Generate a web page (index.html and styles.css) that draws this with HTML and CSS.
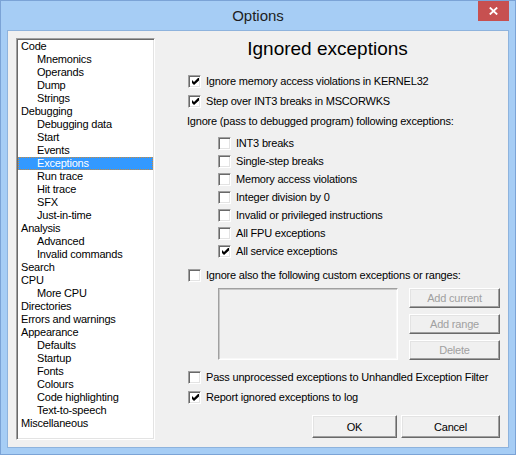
FILE: index.html
```html
<!DOCTYPE html>
<html>
<head>
    <link rel="stylesheet" href="styles.css">
</head>
<body>
    <div class="window">
        <div class="title-bar">
            <span></span>
            <span class="title">Options</span>
            <span class="close-button">
                <svg width="9" height="8" viewBox="0 0 9 8"><path d="M0.8 0.5 L8.2 7.5 M8.2 0.5 L0.8 7.5" stroke="#ffffff" stroke-width="1.8"/></svg>
            </span>
        </div>

        <div class="client">
            <!-- Left: options tree -->
            <ul class="tree">
                <li>Code</li>
                <li class="sub">Mnemonics</li>
                <li class="sub">Operands</li>
                <li class="sub">Dump</li>
                <li class="sub">Strings</li>
                <li>Debugging</li>
                <li class="sub">Debugging data</li>
                <li class="sub">Start</li>
                <li class="sub">Events</li>
                <li class="sub selected">Exceptions</li>
                <li class="sub">Run trace</li>
                <li class="sub">Hit trace</li>
                <li class="sub">SFX</li>
                <li class="sub">Just-in-time</li>
                <li>Analysis</li>
                <li class="sub">Advanced</li>
                <li class="sub">Invalid commands</li>
                <li>Search</li>
                <li>CPU</li>
                <li class="sub">More CPU</li>
                <li>Directories</li>
                <li>Errors and warnings</li>
                <li>Appearance</li>
                <li class="sub">Defaults</li>
                <li class="sub">Startup</li>
                <li class="sub">Fonts</li>
                <li class="sub">Colours</li>
                <li class="sub">Code highlighting</li>
                <li class="sub">Text-to-speech</li>
                <li>Miscellaneous</li>
            </ul>

            <!-- Right: page for the selected item -->
            <div class="panel">
                <h1>Ignored exceptions</h1>

                <div class="option"><span class="check-box checked"><svg width="7" height="7" viewBox="0 0 7 7"><path d="M0 2 L2 4 L6.5 -0.5 L7 0 L7 2.5 L2 7 L0 5 Z" fill="#000"/></svg></span>Ignore memory access violations in KERNEL32</div>
                <div class="option"><span class="check-box checked"><svg width="7" height="7" viewBox="0 0 7 7"><path d="M0 2 L2 4 L6.5 -0.5 L7 0 L7 2.5 L2 7 L0 5 Z" fill="#000"/></svg></span>Step over INT3 breaks in MSCORWKS</div>
                <div class="caption">Ignore (pass to debugged program) following exceptions:</div>

                <div class="sub-options">
                    <div class="option small"><span class="check-box"></span>INT3 breaks</div>
                    <div class="option small"><span class="check-box"></span>Single-step breaks</div>
                    <div class="option small"><span class="check-box"></span>Memory access violations</div>
                    <div class="option small"><span class="check-box"></span>Integer division by 0</div>
                    <div class="option small"><span class="check-box"></span>Invalid or privileged instructions</div>
                    <div class="option small"><span class="check-box"></span>All FPU exceptions</div>
                    <div class="option small"><span class="check-box checked"><svg width="7" height="7" viewBox="0 0 7 7"><path d="M0 2 L2 4 L6.5 -0.5 L7 0 L7 2.5 L2 7 L0 5 Z" fill="#000"/></svg></span>All service exceptions</div>
                </div>

                <div class="option custom"><span class="check-box"></span>Ignore also the following custom exceptions or ranges:</div>

                <div class="ranges">
                    <div class="range-list"></div>
                    <div class="range-buttons">
                        <span class="button disabled">Add current</span>
                        <span class="button disabled">Add range</span>
                        <span class="button disabled">Delete</span>
                    </div>
                </div>

                <div class="option pass"><span class="check-box"></span>Pass unprocessed exceptions to Unhandled Exception Filter</div>
                <div class="option"><span class="check-box checked"><svg width="7" height="7" viewBox="0 0 7 7"><path d="M0 2 L2 4 L6.5 -0.5 L7 0 L7 2.5 L2 7 L0 5 Z" fill="#000"/></svg></span>Report ignored exceptions to log</div>

                <div class="dialog-buttons">
                    <span class="button ok-button">OK</span>
                    <span class="button cancel-button">Cancel</span>
                </div>
            </div>
        </div>
    </div>
</body>
</html>
```

FILE: styles.css
```css
body {
    margin: 0;
    background-color: #a6cdf5;
    font-family: "Liberation Sans", Arial, sans-serif;
}

.window {
    width: 516px;
    height: 455px;
    box-sizing: border-box;
    border: 1px solid #7ba3d6;
    background-color: #a6cdf5;
    display: flex;
    flex-direction: column;
}

.title-bar {
    height: 29px;
    display: grid;
    grid-template-columns: 1fr auto 1fr;
}

.title {
    font-size: 15px;
    line-height: 29px;
    color: #1e1e1e;
}

.close-button {
    justify-self: end;
    align-self: start;
    width: 31px;
    height: 20px;
    margin-right: 6px;
    background-color: #c75050;
    display: flex;
    align-items: center;
    justify-content: center;
}

.client {
    flex: 1;
    margin: 0 6px 6px 6px;
    border: 1px solid #8eb3dd;
    background-color: #f0f0f0;
    display: flex;
    padding: 7px 0 7px 8px;
    font-size: 11px;
    letter-spacing: -0.2px;
    color: #000000;
}

/* Options tree */
.tree {
    width: 139px;
    box-sizing: border-box;
    margin: 0;
    padding: 0;
    list-style: none;
    background-color: #ffffff;
    border: 1px solid;
    border-color: #a0a0a0 #ffffff #ffffff #a0a0a0;
    box-shadow: inset 1px 1px #696969, inset -1px -1px #e3e3e3;
    padding: 1px 1px;
}

.tree li {
    height: 13px;
    line-height: 13px;
    padding-left: 3px;
    white-space: nowrap;
}

.tree li.sub {
    padding-left: 19px;
}

.tree li.selected {
    background-color: #3399ff;
    color: #ffffff;
    outline: 1px dotted #c98a3c;
    outline-offset: -1px;
}

/* Right page */
.panel {
    flex: 1;
    padding: 0 8px 0 33px;
    display: flex;
    flex-direction: column;
}

.panel h1 {
    margin: 0 0 11px -33px;
    font-size: 19px;
    line-height: 22px;
    font-weight: normal;
    letter-spacing: 0;
    text-align: center;
}

.option {
    height: 20px;
    line-height: 20px;
    display: flex;
    align-items: center;
    white-space: nowrap;
}

.option.small {
    height: 18px;
    line-height: 18px;
}

.caption {
    height: 20px;
    line-height: 20px;
    margin-left: -1px;
}

.sub-options {
    margin-top: 3px;
    padding-left: 30px;
}

.option.custom {
    margin-top: 5px;
}

.option.pass {
    margin-top: 7px;
}

.check-box {
    width: 13px;
    height: 13px;
    box-sizing: border-box;
    margin-right: 5px;
    background-color: #ffffff;
    border: 1px solid;
    border-color: #a0a0a0 #ffffff #ffffff #a0a0a0;
    box-shadow: inset 1px 1px #696969, inset -1px -1px #e3e3e3;
    display: flex;
    align-items: center;
    justify-content: center;
    flex-shrink: 0;
}

.check-box svg {
    margin: 1px 0 0 1px;
}

/* Custom ranges */
.ranges {
    margin-top: 3px;
    padding-left: 30px;
    display: flex;
    gap: 11px;
}

.range-list {
    width: 180px;
    height: 72px;
    box-sizing: border-box;
    border: 1px solid;
    border-color: #a0a0a0 #ffffff #ffffff #a0a0a0;
    box-shadow: inset 1px 1px #c8c8c8, inset -1px -1px #f8f8f8;
}

.range-buttons {
    width: 91px;
    display: flex;
    flex-direction: column;
    gap: 6px;
}

.button {
    height: 20px;
    box-sizing: border-box;
    display: flex;
    align-items: center;
    justify-content: center;
    background-color: #f0f0f0;
    border: 1px solid;
    border-color: #ffffff #696969 #696969 #ffffff;
    box-shadow: inset -1px -1px #a0a0a0, inset 1px 1px #e3e3e3;
}

.button.disabled {
    color: #a0a0a0;
}

.dialog-buttons {
    margin-top: 8px;
    display: flex;
    justify-content: flex-end;
    gap: 4px;
}

.dialog-buttons .button {
    height: 23px;
}

.ok-button {
    width: 85px;
}

.cancel-button {
    width: 99px;
}
```
